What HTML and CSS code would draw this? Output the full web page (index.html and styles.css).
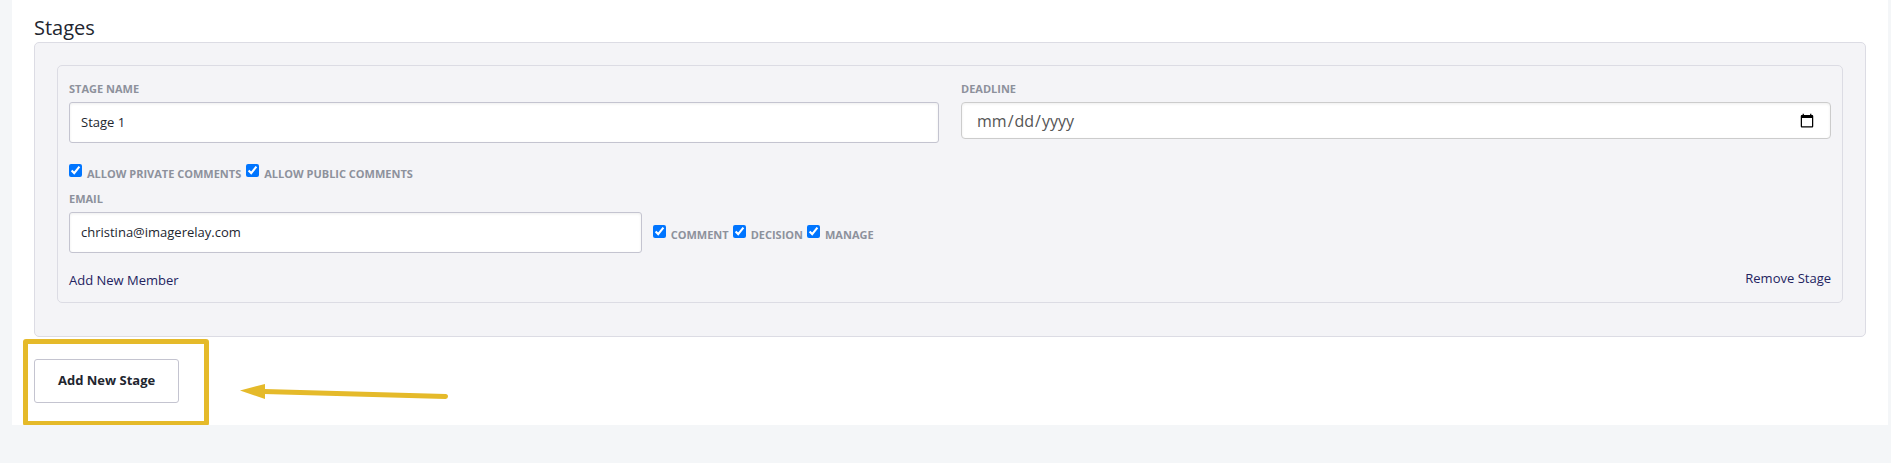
FILE: index.html
```html
<!DOCTYPE html>
<html lang="en-US">
<head>
<meta charset="utf-8">
<title>Stages</title>
<link rel="stylesheet" href="styles.css">
</head>
<body>
<main class="panel">
  <h2 class="title">Stages</h2>
  <section class="stages">
    <div class="stage">
      <div class="row">
        <div class="field">
          <label class="label" for="stage-name">Stage Name</label>
          <input class="input" id="stage-name" type="text" value="Stage 1">
        </div>
        <div class="field">
          <label class="label" for="deadline">Deadline</label>
          <input class="input input-date" id="deadline" type="date">
        </div>
      </div>
      <div class="checks">
        <label class="check"><input class="box" type="checkbox" checked><span class="check-text">Allow Private Comments</span></label>
        <label class="check"><input class="box" type="checkbox" checked><span class="check-text">Allow Public Comments</span></label>
      </div>
      <label class="label label-email" for="email">Email</label>
      <div class="member">
        <input class="input" id="email" type="text" value="christina@imagerelay.com">
        <div class="checks checks-member">
          <label class="check"><input class="box" type="checkbox" checked><span class="check-text">Comment</span></label>
          <label class="check"><input class="box" type="checkbox" checked><span class="check-text">Decision</span></label>
          <label class="check"><input class="box" type="checkbox" checked><span class="check-text">Manage</span></label>
        </div>
      </div>
      <div class="links">
        <a class="link link-add" href="#">Add New Member</a>
        <a class="link" href="#">Remove Stage</a>
      </div>
    </div>
  </section>
  <div class="actions">
    <button class="button" type="button">Add New Stage</button>
    <div class="highlight"></div>
    <svg class="arrow" width="210" height="20" viewBox="0 0 210 20" aria-hidden="true">
      <path d="M24 7.500 L205.500 12.500" stroke="#e5ba2a" stroke-width="5" stroke-linecap="round"/>
      <path d="M0 6.500 L25 0 V15 Z" fill="#e5ba2a"/>
    </svg>
  </div>
</main>
</body>
</html>
```
FILE: styles.css
```css
* { box-sizing: border-box; }
body {
  margin: 0;
  background: #f4f6f8;
  color: #22262f;
  font: 13px/20px "Open Sans", "Noto Sans", sans-serif;
}
.panel {
  margin: 0 3px 0 12px;
  padding: 14px 22px 22px;
  background: #fff;
}
.title {
  margin: 0;
  font-size: 20px;
  line-height: 28px;
  font-weight: 400;
}
.stages {
  padding: 22px 22px 33px;
  background: #f4f4f7;
  border: 1px solid #dcdce4;
  border-radius: 5px;
}
.stage {
  padding: 13px 11px 12px;
  border: 1px solid #dcdce4;
  border-radius: 5px;
}
.row {
  display: grid;
  grid-template-columns: 1fr 1fr;
  gap: 22px;
}
.label {
  display: block;
  margin-bottom: 3px;
  color: #8d919c;
  font-size: 11px;
  font-weight: 700;
  text-transform: uppercase;
}
.input {
  display: block;
  width: 100%;
  height: 41px;
  padding: 0 11px 2px;
  background: #fff;
  border: 1px solid #c4c4d0;
  border-radius: 3px;
  box-shadow: inset 0 1px 3px rgba(0, 0, 0, 0.07);
  color: #22262f;
  font: inherit;
}
.input-date {
  height: 37px;
  padding: 0 13px 0 14px;
  border-color: #ccc;
  border-radius: 4px;
  color: #555;
  font-size: 16px;
}
.checks {
  display: flex;
  gap: 5px;
  margin-top: 19px;
}
.check {
  display: flex;
  gap: 5px;
  color: #8d919c;
  font-size: 11px;
  font-weight: 700;
  text-transform: uppercase;
}
.box {
  width: 13px;
  height: 13px;
  margin: 2px 0 0;
  accent-color: #0075ff;
}
.check-text { padding-top: 2px; }
.label-email { margin-top: 5px; }
.member {
  display: grid;
  grid-template-columns: calc((100% - 44px) / 3) auto;
  justify-content: start;
  gap: 11px;
}
.checks-member {
  gap: 4px;
  margin-top: 11px;
}
.links {
  display: flex;
  justify-content: space-between;
  align-items: flex-start;
  margin-top: 15px;
}
.link {
  color: #23235f;
  text-decoration: none;
}
.link-add { padding-top: 2px; }
.actions {
  position: relative;
  padding-top: 22px;
}
.button {
  display: block;
  height: 44px;
  padding: 0 23px 2px;
  background: #fff;
  border: 1px solid #c4c4d0;
  border-radius: 3px;
  color: #22262f;
  font: inherit;
  font-weight: 700;
}
.highlight {
  position: absolute;
  top: 2px;
  left: -11px;
  width: 186px;
  height: 87px;
  border: 5px solid #e5ba2a;
  border-radius: 3px;
  pointer-events: none;
}
.arrow {
  position: absolute;
  top: 47px;
  left: 206px;
}
```
